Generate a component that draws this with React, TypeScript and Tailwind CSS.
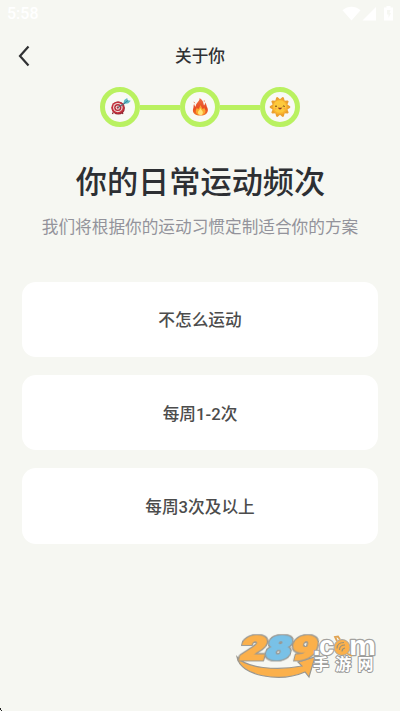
import { Fragment } from 'react'
import type { ReactNode } from 'react'

const OPTIONS = ['不怎么运动', '每周1-2次', '每周3次及以上']

function StatusBar() {
  return (
    <div className="flex h-7 items-center justify-between pl-[7px] pr-[7px] text-white">
      <span className="font-['Roboto'] text-[16px] font-medium leading-7">5:58</span>
      <svg width="51" height="16" viewBox="0 0 51 16" fill="currentColor">
        <path d="M.5 4.300C6-.3 13-.3 18.500 4.300L9.500 14.500Z" />
        <path d="M20.500 14.500 34 1V14.500Z" />
        <path
          fillRule="evenodd"
          d="M42 1.500h2.500V0h4v1.500H51v13h-9ZM45 4v4.500h1.500v3.500l2.500-5h-1.500l1-3Z"
        />
      </svg>
    </div>
  )
}

function TargetIcon() {
  return (
    <svg width="22" height="20" viewBox="0 0 22 20">
      <path d="M4 15.500 3.500 17M13 15.500l1 1.500" stroke="#8d2631" strokeWidth="1.300" />
      <circle cx="9.300" cy="11" r="6.600" fill="#8e2531" />
      <ellipse cx="8.800" cy="10.600" rx="6.500" ry="6.200" fill="#c5303c" />
      <ellipse cx="8.800" cy="10.600" rx="4.800" ry="4.600" fill="#efdcd9" />
      <ellipse cx="8.800" cy="10.600" rx="3.600" ry="3.500" fill="#b72b38" />
      <circle cx="8.800" cy="10.600" r="2.200" fill="#f0dedb" />
      <circle cx="8.800" cy="10.600" r="1.100" fill="#b72b38" />
      <path d="m9 10.500 7-4.500" stroke="#5d6d7a" strokeWidth="1.200" />
      <path d="m14.500 6 .8-3 2.900-2 .6 2.200 3 .6-2.400 2.400-2.700.5Z" fill="#5db9c6" />
      <path d="m15 6.500 4-3" stroke="#317f94" strokeWidth=".9" />
    </svg>
  )
}

function FireIcon() {
  return (
    <svg width="17" height="20" viewBox="0 0 18 20">
      <defs>
        <linearGradient id="flame" x1="0" y1="0" x2="0" y2="1">
          <stop offset="0" stopColor="#ed7044" />
          <stop offset=".6" stopColor="#e84b22" />
          <stop offset="1" stopColor="#f1762d" />
        </linearGradient>
      </defs>
      <path
        d="M8 .5c4 2.500 4 5 4.700 8 1-1 1.300-2 1-3.500 2 2 1.300 4 2.700 6 1.500 4-1 8-7.400 8C2 19 0 15 1.300 11.500c.7-2 0-3.300.9-4.700.6 1.300.8 2.500 1.800 3C3.500 6 8.500 4 8 .5Z"
        fill="url(#flame)"
      />
      <path d="M2 4.500 3 6M13 3v1.500" stroke="#ed8457" strokeWidth="1" />
      <path
        d="M8.500 8c2 2 1.500 3 3 4.500l1.500-2c.3 2 2 2.500 1 5-1 2.500-3 3-5 3s-5-1-5-4c0-2 1-2.500 1-4l1.500 2C7.500 11 9 9.500 8.500 8Z"
        fill="#fba72e"
      />
      <path d="M9 11c.5 2 2.500 2.500 2.500 4.700 0 1.800-1 2.700-2.500 2.700s-2.700-1-2.700-2.700C6.300 13.800 8.500 13 9 11Z" fill="#ffe479" />
    </svg>
  )
}

function SunIcon() {
  return (
    <svg width="22" height="22" viewBox="0 0 22 22">
      <g fill="#eba02f">
        {[0, 36, 72, 108, 144, 180, 216, 252, 288, 324].map((angle) => (
          <path key={angle} d="m8 4.500 2.300-3.700h1.400L14 4.500Z" transform={`rotate(${angle + 18} 11 11)`} />
        ))}
      </g>
      <circle cx="11" cy="11" r="7.500" fill="#f8b32e" />
      <circle cx="10.800" cy="10.500" r="6.300" fill="#fdc93c" />
      <path d="M6 10.500q1-1.200 2 0M13.800 10.500q1-1.200 2 0" fill="none" stroke="#70451b" />
      <path d="M9 11.500q2 .6 4 0-.5 2-2 2t-2-2Z" fill="#8c3524" />
      <circle cx="6.500" cy="12.700" r=".9" fill="#f9a544" />
      <circle cx="15.500" cy="12.700" r=".9" fill="#f9a544" />
    </svg>
  )
}

const STEPS: { name: string; icon: ReactNode }[] = [
  { name: 'goal', icon: <TargetIcon /> },
  { name: 'burn', icon: <FireIcon /> },
  { name: 'habit', icon: <SunIcon /> },
]

function Steps() {
  return (
    <div className="mt-[11px] flex items-center justify-center">
      {STEPS.map((step, i) => (
        <Fragment key={step.name}>
          {i > 0 && <div className="h-[5px] w-10 bg-[#b9f160]" />}
          <div className="flex size-10 items-center justify-center rounded-full border-[5px] border-[#b9f160] bg-[#f8f9f5]">
            {step.icon}
          </div>
        </Fragment>
      ))}
    </div>
  )
}

function Watermark() {
  return (
    <svg className="absolute left-[232px] top-[628px]" width="150" height="52" viewBox="0 0 150 52">
      <path
        d="M5 29C14 40 44 43 70 38l-4-4 17-5-6 20-4-5C48 55 8 48 5 29Z"
        fill="#fbb04b"
        stroke="#999791"
        strokeWidth="1.200"
      />
      <text
        className="[filter:drop-shadow(1px_0_0_#999791)_drop-shadow(-1px_0_0_#999791)_drop-shadow(0_1px_0_#999791)_drop-shadow(0_-1px_0_#999791)]"
        transform="translate(6.500 31.500) skewX(-14)"
        textLength="76"
        lengthAdjust="spacingAndGlyphs"
        fontFamily="Roboto, sans-serif"
        fontWeight="900"
        fontSize="31.500"
        strokeWidth="1.800"
        strokeLinejoin="miter"
      >
        <tspan fill="#fbb04b" stroke="#fbb04b">2</tspan>
        <tspan fill="#79c1e7" stroke="#79c1e7">8</tspan>
        <tspan fill="#fbb04b" stroke="#fbb04b">9</tspan>
      </text>
      <g
        fontFamily="Liberation Sans, sans-serif"
        fontWeight="bold"
        fontSize="27"
        fill="#fff"
        stroke="#a3a29f"
        strokeWidth="2.400"
        strokeLinejoin="round"
        paintOrder="stroke"
      >
        <text x="81" y="27">.</text>
        <text x="87" y="27" textLength="15" lengthAdjust="spacingAndGlyphs">c</text>
        <text x="117" y="27" textLength="27" lengthAdjust="spacingAndGlyphs">m</text>
      </g>
      <circle cx="110" cy="19.500" r="8" fill="#fbb04b" stroke="#aaa9a6" />
      <path d="m105 13-2-4 3-.5 2 3m7 14 5 2.500" fill="none" stroke="#e0a454" strokeWidth="1.800" />
      <path d="M105 20.500q0-6 7-6M107.500 22q0-5 5.500-5M110 23.500q0-3 3-3.500" fill="none" stroke="#999078" strokeWidth="1.100" />
      <text
        x="81"
        y="42"
        fontFamily="Noto Sans CJK SC, sans-serif"
        fontWeight="bold"
        fontSize="16"
        letterSpacing="6.300"
        fill="#fff"
        stroke="#9b9b99"
        strokeWidth="2"
        strokeLinejoin="round"
        paintOrder="stroke"
      >
        手游网
      </text>
    </svg>
  )
}

export default function App() {
  return (
    <div className="relative h-[711px] w-[400px] overflow-hidden bg-[#f6f7f2] font-['Roboto','Noto_Sans_CJK_SC',sans-serif]">
      <StatusBar />

      <header className="grid h-12 grid-cols-[50px_1fr_50px] items-center pt-2">
        <button className="pl-[18px]" aria-label="返回">
          <svg width="13" height="22" viewBox="0 0 13 22" fill="none" stroke="#303133" strokeWidth="2.200">
            <path d="M10.500 1.500 2 11l8.500 9.500" />
          </svg>
        </button>
        <h1 className="pt-0.5 text-center text-[16.670px] font-medium leading-6 text-[#303133]">关于你</h1>
      </header>

      <Steps />

      <h2 className="mt-[33px] pl-px text-center text-[31.200px] font-medium leading-[46px] text-[#2d2f33]">
        你的日常运动频次
      </h2>
      <p className="mt-[10px] text-center text-[16.670px] leading-6 text-[#93939b]">
        我们将根据你的运动习惯定制适合你的方案
      </p>

      <div className="mt-[41.700px] flex flex-col gap-[17.800px] px-[22px]">
        {OPTIONS.map((option) => (
          <button
            key={option}
            className="h-[75.500px] rounded-[14px] bg-white pt-[3px] text-[16.670px] font-medium text-[#4c4c4c]"
          >
            {option}
          </button>
        ))}
      </div>

      <Watermark />

      {/* rounded screen corner */}
      <svg className="absolute bottom-0 left-0" width="2" height="3" viewBox="0 0 2 3">
        <path d="M0 0h1v2h1v1H1V2H0Z" fill="#222" />
      </svg>
    </div>
  )
}
